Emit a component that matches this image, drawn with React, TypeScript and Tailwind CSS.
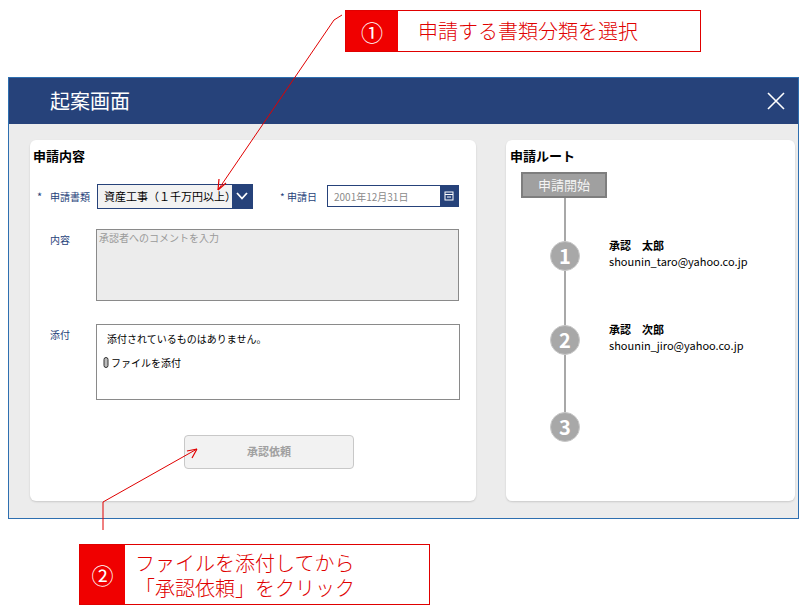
import React from "react";

const F = { fontFamily: '"Noto Sans CJK JP", "Noto Sans", sans-serif' };

function Step({ n }: { n: number }) {
  return (
    <div className="w-[30px] h-[30px] rounded-full bg-[#a8a8a8] border border-[#c8c8c8] text-white flex items-center justify-center text-[20px] font-bold leading-none">
      {n}
    </div>
  );
}

export default function App() {
  return (
    <div className="relative w-[803px] h-[612px] bg-white overflow-hidden" style={F}>
      {/* callout 1 */}
      <div className="flex pl-[345px] pt-[10px]">
        <div className="flex h-[42px] w-[356px] border border-[#e00000]">
          <div className="w-[52px] bg-[#f00000] text-white text-[22px] flex items-center justify-center">①</div>
          <div className="flex-1 text-[#e00000] text-[20px] font-light flex items-center pl-[20px]">申請する書類分類を選択</div>
        </div>
      </div>

      {/* window */}
      <div className="ml-[8px] mt-[25px] w-[791px] h-[442px] border border-[#2e6fb0] bg-[#ececec] flex flex-col">
        <div className="h-[46px] bg-[#26427a] flex items-center justify-between pl-[41px] pr-[12px] shrink-0">
          <span className="text-white text-[20px]">起案画面</span>
          <svg width="20" height="20" viewBox="0 0 20 20"><path d="M2 2L18 18M18 2L2 18" stroke="white" strokeWidth="1.6" /></svg>
        </div>
        <div className="flex gap-[30px] pl-[21px] pr-[3px] pt-[16px]">
          {/* left card */}
          <div className="w-[446px] h-[361px] bg-white rounded-[6px] shadow-[0_1px_2px_rgba(0,0,0,0.15)] pl-[3px] pt-[6px] relative">
            <div className="text-[13px] font-bold text-black">申請内容</div>
            <div className="flex items-center mt-[18px] h-[25px] text-[11px]">
              <span className="w-[13px] pl-[4px] text-[#26427a]">*</span>
              <span className="w-[51px] pl-[4px] text-[#26427a] text-[10px]">申請書類</span>
              <div className="flex w-[156px] h-[25px] border border-[#26427a] bg-[#f2f2f2]">
                <span className="flex-1 flex items-center pl-[6px] text-[11px] text-black">資産工事（１千万円以上）</span>
                <div className="w-[20px] bg-[#26427a] flex items-center justify-center">
                  <svg width="12" height="8" viewBox="0 0 12 8"><path d="M1 1L6 6.5L11 1" stroke="white" strokeWidth="1.8" fill="none" /></svg>
                </div>
              </div>
              <span className="ml-[27px] text-[#26427a] w-[47px] text-[10px]">* 申請日</span>
              <div className="flex w-[132px] h-[22px] border border-[#26427a] bg-white">
                <span className="flex-1 flex items-center pl-[6px] text-[10px] text-[#8a8a8a]">2001年12月31日</span>
                <div className="w-[18px] bg-[#26427a] flex items-center justify-center">
                  <svg width="10" height="10" viewBox="0 0 10 10"><rect x="1" y="1" width="8" height="8" fill="none" stroke="white" /><path d="M1 3.5H9M3 6H7" stroke="white" /></svg>
                </div>
              </div>
            </div>
            <div className="flex mt-[20px]">
              <span className="w-[63px] pl-[17px] pt-[3px] text-[10px] text-[#26427a]">内容</span>
              <div className="w-[363px] h-[72px] bg-[#ececec] border border-[#8a8a8a] pl-[2px] text-[10px] text-[#9a9a9a]">承認者へのコメントを入力</div>
            </div>
            <div className="flex mt-[23px]">
              <span className="w-[63px] pl-[17px] pt-[3px] text-[10px] text-[#26427a]">添付</span>
              <div className="w-[364px] h-[76px] bg-white border border-[#8a8a8a] pl-[10px] pt-[6px] text-[10px] text-black">
                <div>添付されているものはありません。</div>
                <div className="mt-[9px] -ml-[4px] flex items-center gap-[2px]">
                  <svg width="6" height="11" viewBox="0 0 6 11"><rect x="1" y="0.5" width="4" height="10" rx="2" fill="#bbb" stroke="#333" /></svg>
                  ファイルを添付
                </div>
              </div>
            </div>
            <div className="flex pl-[151px] mt-[35px]">
              <div className="w-[170px] h-[34px] rounded-[4px] border border-[#c8c8c8] bg-[#f2f2f2] flex items-center justify-center text-[11px] font-bold text-[#a0a0a0]">承認依頼</div>
            </div>
          </div>
          {/* right card */}
          <div className="w-[289px] h-[361px] bg-white rounded-[6px] shadow-[0_1px_2px_rgba(0,0,0,0.15)] pl-[4px] pt-[6px]">
            <div className="text-[13px] font-bold text-black">申請ルート</div>
            <div className="relative ml-[11px] mt-[6px]">
              <div className="w-[86px] h-[26px] bg-[#a0a0a0] border-2 border-[#7e7e7e] flex items-center justify-center text-[13px] text-[#f4f4f4]">申請開始</div>
              <div className="absolute left-[43px] top-[26px] w-[2px] h-[238px] bg-[#a8a8a8]" />
              <div className="relative flex flex-col">
                <div className="flex items-start mt-[43px] pl-[29px]">
                  <Step n={1} />
                  <div className="ml-[29px] -mt-[4px] text-[11px] leading-[16px]">
                    <div className="font-bold">承認　太郎</div>
                    <div>shounin_taro@yahoo.co.jp</div>
                  </div>
                </div>
                <div className="flex items-start mt-[54px] pl-[29px]">
                  <Step n={2} />
                  <div className="ml-[29px] -mt-[4px] text-[11px] leading-[16px]">
                    <div className="font-bold">承認　次郎</div>
                    <div>shounin_jiro@yahoo.co.jp</div>
                  </div>
                </div>
                <div className="flex items-start mt-[57px] pl-[29px]">
                  <Step n={3} />
                </div>
              </div>
            </div>
          </div>
        </div>
      </div>

      {/* callout 2 */}
      <div className="flex pl-[79px] mt-[25px]">
        <div className="flex h-[61px] w-[351px] border border-[#e00000]">
          <div className="w-[45px] bg-[#f00000] text-white text-[22px] flex items-center justify-center">②</div>
          <div className="flex-1 text-[#e00000] text-[20px] font-light leading-[25px] flex flex-col justify-center pl-[10px]">
            <span>ファイルを添付してから</span>
            <span>「承認依頼」をクリック</span>
          </div>
        </div>
      </div>

      {/* arrows */}
      <svg className="absolute left-0 top-0 pointer-events-none" width="803" height="612">
        <polyline points="342,15 334,20 218,190" fill="none" stroke="#e00000" strokeWidth="1" />
        <path d="M218,190 L219,179 M218,190 L226,183" stroke="#e00000" strokeWidth="1.2" fill="none" />
        <polyline points="103,530 103,502 197,449" fill="none" stroke="#e00000" strokeWidth="1" />
        <path d="M197,449 L187,451 M197,449 L192,458" stroke="#e00000" strokeWidth="1.2" fill="none" />
      </svg>
    </div>
  );
}
